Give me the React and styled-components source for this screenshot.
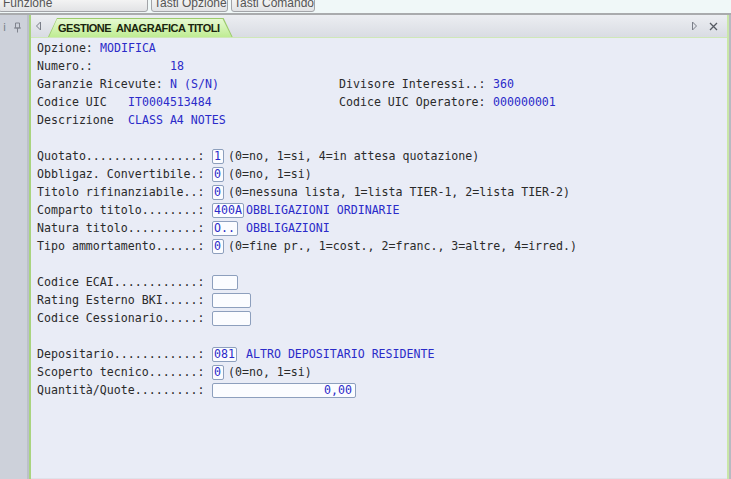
import React from 'react'
import styled, { createGlobalStyle } from 'styled-components'

const Global = createGlobalStyle`
  html, body { margin: 0; padding: 0; background: #eef6f6; }
  body { width: 731px; height: 479px; overflow: hidden; }
`

const Screen = styled.div`
  width: 731px;
  height: 479px;
  display: flex;
  flex-direction: column;
  background: #eef6f6;
  overflow: hidden;
`

const TopBar = styled.div`
  height: 12px;
  display: flex;
  align-items: flex-end;
  gap: 3px;
  overflow: hidden;
  background: #f0f8f8;
  border-bottom: 2px solid #a9abad;
  padding-bottom: 1px;
`

const BarButton = styled.div`
  height: 15px;
  width: ${p => p.w}px;
  margin-left: ${p => p.ml || 0}px;
  flex-shrink: 0;
  box-sizing: border-box;
  border: 1px solid #a2a4a8;
  border-radius: 3px;
  background: linear-gradient(#f6f6f6, #e2e3e5);
  font-family: "Liberation Sans", Arial, sans-serif;
  font-size: 12px;
  line-height: 11px;
  color: #555;
  padding: 0 ${p => p.pad || 2}px;
  text-align: ${p => p.align || 'center'};
  white-space: nowrap;
  overflow: hidden;
`

const Main = styled.div`
  flex: 1;
  display: flex;
  min-height: 0;
`

const SidePanel = styled.div`
  width: 27px;
  flex-shrink: 0;
  background: #cdd1da;
  border-right: 2px solid #bcc0ca;
  display: flex;
  flex-direction: column;
`

const SideHead = styled.div`
  height: 24px;
  display: flex;
  align-items: center;
  gap: 7px;
  padding-left: 3px;
  font-family: "DejaVu Sans", sans-serif;
  font-size: 11px;
  color: #7a7e88;
`

const Document = styled.div`
  flex: 1;
  display: flex;
  flex-direction: column;
  border-left: 2px solid #a9d47f;
  border-right: 2px solid #c9e6a8;
  margin-right: 2px;
  box-shadow: 2px 0 0 #b7bac2;
`

const TabStrip = styled.div`
  height: 22px;
  flex-shrink: 0;
  display: flex;
  align-items: flex-end;
  background: linear-gradient(#eceef2, #d9dce3);
  border-bottom: 1px solid #cfe7b8;
  padding-left: 4px;
`

const StripIcon = styled.div`
  height: 22px;
  display: flex;
  align-items: center;
  margin-left: ${p => p.ml || 0}px;
`

const TabOuter = styled.div`
  margin-left: 6px;
  height: 18px;
  padding: 1px 1px 0 1px;
  background: #9ccb6c;
  clip-path: polygon(9px 0, calc(100% - 9px) 0, 100% 100%, 0 100%);
`

const Tab = styled.div`
  height: 18px;
  box-sizing: border-box;
  padding: 0 12px 0 9px;
  display: flex;
  align-items: center;
  background: linear-gradient(#e6f9d2, #bfec93);
  clip-path: polygon(8px 0, calc(100% - 9px) 0, 100% 100%, 0 100%);
  font-family: "Liberation Sans", Arial, sans-serif;
  font-weight: bold;
  font-size: 11px;
  letter-spacing: -0.45px;
  color: #1a240e;
  white-space: pre;
`

const Spacer = styled.div`
  flex: 1;
`

const Content = styled.div`
  flex: 1;
  background: #e9ecf6;
  padding: 1px 0 0 6px;
  border-bottom: 1px solid #dfe2ea;
  font-family: "DejaVu Sans Mono", monospace;
  font-size: 11.6px;
  color: #2a2a2a;
`

const Row = styled.div`
  height: 18px;
  display: flex;
  align-items: center;
  white-space: pre;
`

const Cell = styled.div`
  width: ${p => p.w}px;
  flex-shrink: 0;
  display: flex;
  align-items: center;
`

const Label = styled.span`
  display: inline-block;
  width: ${p => p.ch * 7}px;
  flex-shrink: 0;
  white-space: pre;
`

const Value = styled.span`
  color: #2b2bc9;
`

const Slot = styled.div`
  width: ${p => p.w}px;
  flex-shrink: 0;
  display: flex;
  align-items: center;
`

const Field = styled.div`
  width: ${p => p.w}px;
  height: 15px;
  box-sizing: border-box;
  flex-shrink: 0;
  border: 1px solid #8d9fbd;
  border-radius: 2px;
  background: #fbfcff;
  color: #2b2bc9;
  padding: 0 ${p => (p.right ? 3 : 1)}px;
  display: flex;
  align-items: center;
  justify-content: ${p => (p.right ? 'flex-end' : 'flex-start')};
  line-height: 13px;
  overflow: hidden;
`

const Hint = styled.span`
  margin-left: 4px;
`

const ArrowLeft = () => (
  <svg width="7" height="10" viewBox="0 0 7 10">
    <path d="M5.5 1 L1.5 5 L5.5 9 Z" fill="none" stroke="#7a7e88" strokeWidth="1" />
  </svg>
)

const ArrowRight = () => (
  <svg width="7" height="10" viewBox="0 0 7 10">
    <path d="M1.5 1 L5.5 5 L1.5 9 Z" fill="none" stroke="#7a7e88" strokeWidth="1" />
  </svg>
)

const Close = () => (
  <svg width="9" height="9" viewBox="0 0 9 9">
    <path d="M1 1 L8 8 M8 1 L1 8" stroke="#555a62" strokeWidth="1.3" />
  </svg>
)

const Pin = () => (
  <svg width="9" height="11" viewBox="0 0 9 11">
    <path d="M2.5 1 H6.5 V6 H2.5 Z M1 6 H8 M4.5 6 V10.5" fill="none" stroke="#80848e" strokeWidth="1" />
  </svg>
)

const Blank = () => <Row />

const App = () => {
  return (
    <Screen>
      <Global />
      <TopBar>
        <BarButton w={150} ml={-2} align="left" pad={4}>Funzione</BarButton>
        <BarButton w={77}>Tasti Opzione</BarButton>
        <BarButton w={84}>Tasti Comando</BarButton>
      </TopBar>
      <Main>
        <SidePanel>
          <SideHead>
            <span>i</span>
            <Pin />
          </SideHead>
        </SidePanel>
        <Document>
          <TabStrip>
            <StripIcon><ArrowLeft /></StripIcon>
            <TabOuter>
              <Tab>GESTIONE  ANAGRAFICA TITOLI</Tab>
            </TabOuter>
            <Spacer />
            <StripIcon><ArrowRight /></StripIcon>
            <StripIcon ml={11}><Close /></StripIcon>
            <StripIcon ml={9} />
          </TabStrip>
          <Content>
            <Row><Label ch={9}>Opzione:</Label><Value>MODIFICA</Value></Row>
            <Row><Label ch={19}>Numero.:</Label><Value>18</Value></Row>
            <Row>
              <Cell w={302}><Label ch={19}>Garanzie Ricevute:</Label><Value>N (S/N)</Value></Cell>
              <Label ch={22}>Divisore Interessi..:</Label><Value>360</Value>
            </Row>
            <Row>
              <Cell w={302}><Label ch={13}>Codice UIC</Label><Value>IT0004513484</Value></Cell>
              <Label ch={22}>Codice UIC Operatore:</Label><Value>000000001</Value>
            </Row>
            <Row><Label ch={13}>Descrizione</Label><Value>CLASS A4 NOTES</Value></Row>
            <Blank />
            <Row><Label ch={25}>Quotato................:</Label><Field w={12}>1</Field><Hint>(0=no, 1=si, 4=in attesa quotazione)</Hint></Row>
            <Row><Label ch={25}>Obbligaz. Convertibile.:</Label><Field w={12}>0</Field><Hint>(0=no, 1=si)</Hint></Row>
            <Row><Label ch={25}>Titolo rifinanziabile..:</Label><Field w={12}>0</Field><Hint>(0=nessuna lista, 1=lista TIER-1, 2=lista TIER-2)</Hint></Row>
            <Row><Label ch={25}>Comparto titolo........:</Label><Slot w={34}><Field w={32}>400A</Field></Slot><Value>OBBLIGAZIONI ORDINARIE</Value></Row>
            <Row><Label ch={25}>Natura titolo..........:</Label><Slot w={34}><Field w={26}>O..</Field></Slot><Value>OBBLIGAZIONI</Value></Row>
            <Row><Label ch={25}>Tipo ammortamento......:</Label><Field w={12}>0</Field><Hint>(0=fine pr., 1=cost., 2=franc., 3=altre, 4=irred.)</Hint></Row>
            <Blank />
            <Row><Label ch={25}>Codice ECAI............:</Label><Field w={26} /></Row>
            <Row><Label ch={25}>Rating Esterno BKI.....:</Label><Field w={39} /></Row>
            <Row><Label ch={25}>Codice Cessionario.....:</Label><Field w={39} /></Row>
            <Blank />
            <Row><Label ch={25}>Depositario............:</Label><Slot w={34}><Field w={25}>081</Field></Slot><Value>ALTRO DEPOSITARIO RESIDENTE</Value></Row>
            <Row><Label ch={25}>Scoperto tecnico.......:</Label><Field w={12}>0</Field><Hint>(0=no, 1=si)</Hint></Row>
            <Row><Label ch={25}>Quantità/Quote.........:</Label><Field w={144} right>0,00</Field></Row>
          </Content>
        </Document>
      </Main>
    </Screen>
  )
}

export default App
